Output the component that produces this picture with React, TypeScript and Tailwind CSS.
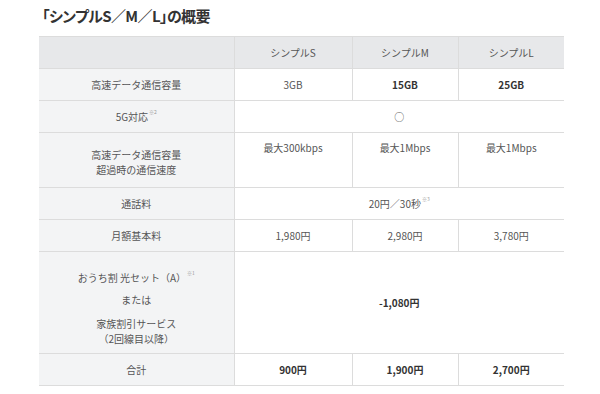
import React from "react";

const font = { fontFamily: '"Noto Sans CJK JP", "Noto Sans", sans-serif' };

function Sup({ children }: { children: React.ReactNode }) {
  return <sup className="text-[5px] text-[#999] align-super ml-[1px]">{children}</sup>;
}

export default function App() {
  const base = "border border-[#dcdcdc] text-center align-middle";
  const th = base + " bg-[#e7e8ea] font-normal";
  const lc = base + " bg-[#f3f4f5] border-l-0";
  const c = base + " bg-white";
  const cr = c + " border-r-0";
  const b = " font-bold text-[#333]";
  return (
    <div className="w-[600px] h-[394px] bg-white text-[#555] overflow-hidden" style={font}>
      <h1 className="pl-[42px] pt-[6px] h-[36px] text-[15px] leading-[20px] font-bold text-[#333] tracking-[-0.6px] [font-feature-settings:'palt']">
        「シンプルS／M／L」の概要
      </h1>
      <table className="ml-[39px] border-collapse table-fixed text-[10px] leading-[15px]" style={{ width: 525 }}>
        <colgroup>
          <col className="w-[195px]" />
          <col className="w-[118px]" />
          <col className="w-[106px]" />
          <col className="w-[106px]" />
        </colgroup>
        <thead>
          <tr className="h-[32px]">
            <th className={th + " border-l-0"}></th>
            <th className={th}>シンプルS</th>
            <th className={th}>シンプルM</th>
            <th className={th + " border-r-0"}>シンプルL</th>
          </tr>
        </thead>
        <tbody>
          <tr className="h-[32px]">
            <td className={lc}>高速データ通信容量</td>
            <td className={c}>3GB</td>
            <td className={c + b}>15GB</td>
            <td className={cr + b}>25GB</td>
          </tr>
          <tr className="h-[32px]">
            <td className={lc}>
              5G対応<Sup>※2</Sup>
            </td>
            <td className={cr} colSpan={3}>
              ○
            </td>
          </tr>
          <tr className="h-[55px]">
            <td className={lc + " pt-[4px]"}>
              高速データ通信容量
              <br />
              超過時の通信速度
            </td>
            <td className={c + " !align-top pt-[7px]"}>最大300kbps</td>
            <td className={c + " !align-top pt-[7px]"}>最大1Mbps</td>
            <td className={cr + " !align-top pt-[7px]"}>最大1Mbps</td>
          </tr>
          <tr className="h-[32px]">
            <td className={lc}>通話料</td>
            <td className={cr} colSpan={3}>
              20円／30秒<Sup>※3</Sup>
            </td>
          </tr>
          <tr className="h-[32px]">
            <td className={lc}>月額基本料</td>
            <td className={c}>1,980円</td>
            <td className={c}>2,980円</td>
            <td className={cr}>3,780円</td>
          </tr>
          <tr className="h-[102px]">
            <td className={lc + " pt-[10px]"}>
              <div className="flex flex-col items-center">
                <div>
                  おうち割 光セット（A）<Sup>※1</Sup>
                </div>
                <div className="mt-[7px]">または</div>
                <div className="mt-[9px]">家族割引サービス</div>
                <div>（2回線目以降）</div>
              </div>
            </td>
            <td className={cr + b} colSpan={3}>
              -1,080円
            </td>
          </tr>
          <tr className="h-[32px]">
            <td className={lc}>合計</td>
            <td className={c + b}>900円</td>
            <td className={c + b}>1,900円</td>
            <td className={cr + b}>2,700円</td>
          </tr>
        </tbody>
      </table>
    </div>
  );
}
